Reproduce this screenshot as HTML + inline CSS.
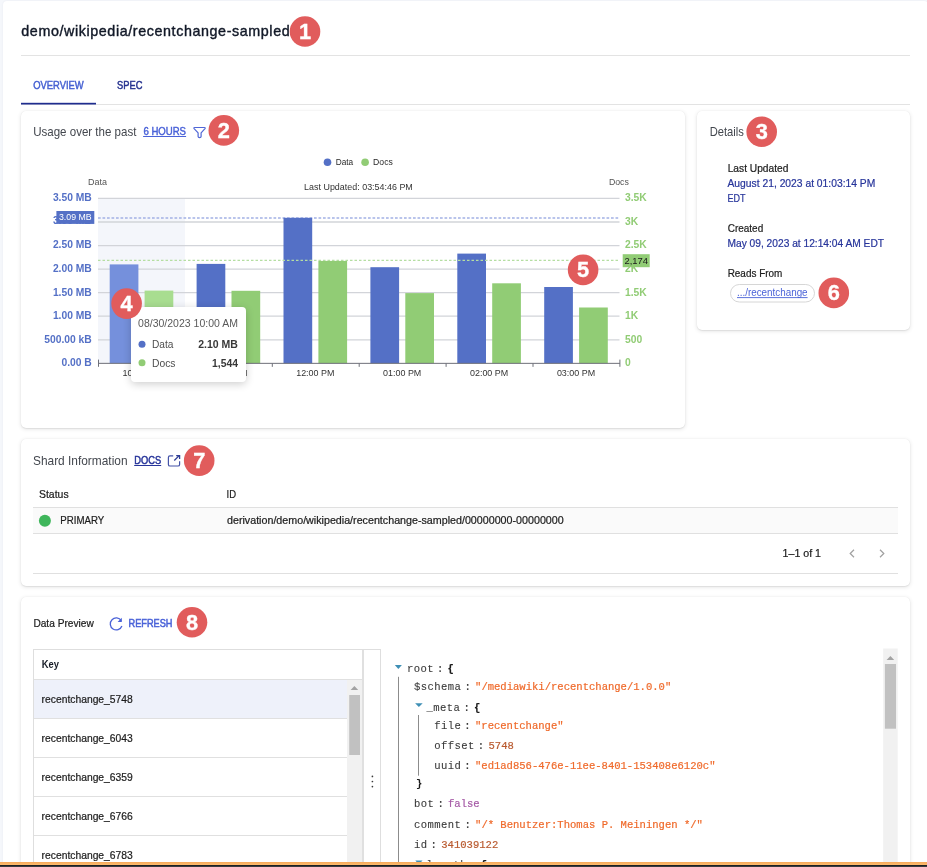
<!DOCTYPE html>
<html><head><meta charset="utf-8"><title>demo/wikipedia/recentchange-sampled</title>
<style>
html,body{margin:0;padding:0;}
body{width:927px;height:867px;overflow:hidden;position:relative;background:#f5f7fb;font-family:"Liberation Sans", sans-serif;}
.panel{position:absolute;left:3px;top:1px;width:925px;height:900px;background:#fff;border-radius:4px;box-shadow:0 0 2px rgba(60,70,100,.08);}
.card{position:absolute;background:#fff;border-radius:5px;box-shadow:0 1px 4px 0 rgba(0,0,0,.12),0 1px 1px 0 rgba(0,0,0,.05),0 0 1px rgba(0,0,0,.08);}
svg.layer{position:absolute;left:0;top:0;will-change:transform;}
.tip{position:absolute;left:130.7px;top:307px;width:115.7px;height:74.5px;background:#fff;border-radius:4px;box-shadow:0 2px 9px rgba(0,0,0,.2);}
.bar1{position:absolute;left:0;top:862px;width:927px;height:3px;background:linear-gradient(#f5a85a,#fdbd6e);}
.bar2{position:absolute;left:0;top:865px;width:927px;height:2px;background:linear-gradient(#1d2025 50%,#3b3c3e 50%);}
</style></head><body>
<div class="panel"></div>
<div class="card" style="left:21px;top:111px;width:664px;height:317px"></div>
<div class="card" style="left:697px;top:111px;width:213px;height:219px"></div>
<div class="card" style="left:21px;top:439px;width:889px;height:147px"></div>
<div class="card" style="left:21px;top:597px;width:889px;height:300px"></div>
<svg class="layer" width="927" height="867" viewBox="0 0 927 867">
<text x="21.3" y="35.5" font-size="14.3" fill="#111827" font-family='"Liberation Sans", sans-serif' letter-spacing="0.6" stroke="#111827" stroke-width="0.4">demo/wikipedia/recentchange-sampled</text>
<line x1="21" y1="55.5" x2="910" y2="55.5" stroke="#e3e3e3" stroke-width="1"/>
<text x="33.2" y="88.6" font-size="10.6" fill="#4560d2" font-family='"Liberation Sans", sans-serif' textLength="50.5" lengthAdjust="spacingAndGlyphs" stroke="#4560d2" stroke-width="0.45">OVERVIEW</text>
<text x="117" y="88.6" font-size="10.6" fill="#24318f" font-family='"Liberation Sans", sans-serif' textLength="25.4" lengthAdjust="spacingAndGlyphs" stroke="#24318f" stroke-width="0.45">SPEC</text>
<line x1="21" y1="104.5" x2="910" y2="104.5" stroke="#e3e3e3" stroke-width="1"/>
<rect x="21" y="102.8" width="75" height="1.7" fill="#1f2d8f"/>
<text x="33.2" y="136" font-size="13" fill="#43474e" font-family='"Liberation Sans", sans-serif' textLength="103.2" lengthAdjust="spacingAndGlyphs">Usage over the past</text>
<text x="143.4" y="134.8" font-size="11.2" fill="#4a62d8" font-family='"Liberation Sans", sans-serif' textLength="42.6" lengthAdjust="spacingAndGlyphs" stroke="#4a62d8" stroke-width="0.45">6 HOURS</text>
<line x1="143.1" y1="136.5" x2="186.1" y2="136.5" stroke="#4a62d8" stroke-width="1"/>
<path d="M194.6 127.5 H204.4 Q205.6 127.5 205 128.6 L201.1 132.9 V136.6 Q201.1 137.6 199.6 137.6 Q198.1 137.6 198.1 136.6 V132.9 L194.1 128.6 Q193.5 127.5 194.6 127.5 Z" fill="none" stroke="#4f66d6" stroke-width="1.2" stroke-linejoin="round"/>
<rect x="98" y="198.45" width="87" height="164.90000000000003" fill="#f4f6fb"/>
<line x1="98" y1="198.4" x2="619.5" y2="198.4" stroke="#d2d4d9" stroke-width="1.3"/>
<line x1="98" y1="222.0" x2="619.5" y2="222.0" stroke="#d2d4d9" stroke-width="1.3"/>
<line x1="98" y1="245.6" x2="619.5" y2="245.6" stroke="#d2d4d9" stroke-width="1.3"/>
<line x1="98" y1="269.1" x2="619.5" y2="269.1" stroke="#d2d4d9" stroke-width="1.3"/>
<line x1="98" y1="292.7" x2="619.5" y2="292.7" stroke="#d2d4d9" stroke-width="1.3"/>
<line x1="98" y1="316.2" x2="619.5" y2="316.2" stroke="#d2d4d9" stroke-width="1.3"/>
<line x1="98" y1="339.8" x2="619.5" y2="339.8" stroke="#d2d4d9" stroke-width="1.3"/>
<line x1="98" y1="218.0" x2="619.5" y2="218.0" stroke="#a3b1e5" stroke-width="1.5" stroke-dasharray="2.7,1.8"/>
<rect x="109.7" y="264.4" width="28.7" height="98.9" fill="#7590dc"/>
<rect x="144.6" y="290.6" width="28.7" height="72.7" fill="#a8dd90"/>
<rect x="196.6" y="263.9" width="28.7" height="99.4" fill="#5470c6"/>
<rect x="231.5" y="290.8" width="28.7" height="72.6" fill="#91cc75"/>
<rect x="283.5" y="217.8" width="28.7" height="145.6" fill="#5470c6"/>
<rect x="318.4" y="260.9" width="28.7" height="102.4" fill="#91cc75"/>
<rect x="370.4" y="267.2" width="28.7" height="96.1" fill="#5470c6"/>
<rect x="405.3" y="293.1" width="28.7" height="70.2" fill="#91cc75"/>
<rect x="457.3" y="253.6" width="28.7" height="109.8" fill="#5470c6"/>
<rect x="492.2" y="283.3" width="28.7" height="80.1" fill="#91cc75"/>
<rect x="544.2" y="287.0" width="28.7" height="76.3" fill="#5470c6"/>
<rect x="579.1" y="307.5" width="28.7" height="55.8" fill="#91cc75"/>
<line x1="98" y1="260.4" x2="619.5" y2="260.4" stroke="#b5dea2" stroke-width="1.1" stroke-dasharray="2.5,2"/>
<line x1="98.5" y1="363.35" x2="620" y2="363.35" stroke="#6e7079" stroke-width="1"/>
<line x1="98.5" y1="359.6" x2="98.5" y2="366.8" stroke="#6e7079" stroke-width="1"/>
<line x1="185.4" y1="363.35" x2="185.4" y2="366.85" stroke="#6e7079" stroke-width="1"/>
<line x1="272.3" y1="363.35" x2="272.3" y2="366.85" stroke="#6e7079" stroke-width="1"/>
<line x1="359.2" y1="363.35" x2="359.2" y2="366.85" stroke="#6e7079" stroke-width="1"/>
<line x1="446.1" y1="363.35" x2="446.1" y2="366.85" stroke="#6e7079" stroke-width="1"/>
<line x1="533.0" y1="363.35" x2="533.0" y2="366.85" stroke="#6e7079" stroke-width="1"/>
<line x1="619.9" y1="359.6" x2="619.9" y2="366.8" stroke="#6e7079" stroke-width="1"/>
<text x="91.8" y="366.2" font-size="10.3" fill="#5470c6" font-family='"Liberation Sans", sans-serif' font-weight="700" text-anchor="end">0.00 B</text>
<text x="91.8" y="342.6" font-size="10.3" fill="#5470c6" font-family='"Liberation Sans", sans-serif' font-weight="700" text-anchor="end">500.00 kB</text>
<text x="91.8" y="319.0" font-size="10.3" fill="#5470c6" font-family='"Liberation Sans", sans-serif' font-weight="700" text-anchor="end">1.00 MB</text>
<text x="91.8" y="295.5" font-size="10.3" fill="#5470c6" font-family='"Liberation Sans", sans-serif' font-weight="700" text-anchor="end">1.50 MB</text>
<text x="91.8" y="271.9" font-size="10.3" fill="#5470c6" font-family='"Liberation Sans", sans-serif' font-weight="700" text-anchor="end">2.00 MB</text>
<text x="91.8" y="248.4" font-size="10.3" fill="#5470c6" font-family='"Liberation Sans", sans-serif' font-weight="700" text-anchor="end">2.50 MB</text>
<text x="91.8" y="223.8" font-size="10.3" fill="#5470c6" font-family='"Liberation Sans", sans-serif' font-weight="700" text-anchor="end">3.00 MB</text>
<text x="91.8" y="201.2" font-size="10.3" fill="#5470c6" font-family='"Liberation Sans", sans-serif' font-weight="700" text-anchor="end">3.50 MB</text>
<text x="625" y="366.2" font-size="10.3" fill="#91cc75" font-family='"Liberation Sans", sans-serif' font-weight="700">0</text>
<text x="625" y="342.6" font-size="10.3" fill="#91cc75" font-family='"Liberation Sans", sans-serif' font-weight="700">500</text>
<text x="625" y="319.0" font-size="10.3" fill="#91cc75" font-family='"Liberation Sans", sans-serif' font-weight="700">1K</text>
<text x="625" y="295.5" font-size="10.3" fill="#91cc75" font-family='"Liberation Sans", sans-serif' font-weight="700">1.5K</text>
<text x="625" y="271.9" font-size="10.3" fill="#91cc75" font-family='"Liberation Sans", sans-serif' font-weight="700">2K</text>
<text x="625" y="248.4" font-size="10.3" fill="#91cc75" font-family='"Liberation Sans", sans-serif' font-weight="700">2.5K</text>
<text x="625" y="224.8" font-size="10.3" fill="#91cc75" font-family='"Liberation Sans", sans-serif' font-weight="700">3K</text>
<text x="625" y="201.2" font-size="10.3" fill="#91cc75" font-family='"Liberation Sans", sans-serif' font-weight="700">3.5K</text>
<rect x="56.4" y="211" width="37.9" height="12.9" fill="#5470c6"/>
<text x="59" y="220" font-size="9.6" fill="#fff" font-family='"Liberation Sans", sans-serif' textLength="32.6" lengthAdjust="spacingAndGlyphs">3.09 MB</text>
<rect x="622.7" y="254.2" width="27" height="13" fill="#91cc75"/>
<text x="624.5" y="264.4" font-size="9.6" fill="#1a1a1a" font-family='"Liberation Sans", sans-serif' textLength="23.5" lengthAdjust="spacingAndGlyphs">2,174</text>
<text x="88" y="184.8" font-size="9.4" fill="#555" font-family='"Liberation Sans", sans-serif' textLength="19" lengthAdjust="spacingAndGlyphs">Data</text>
<text x="608.9" y="184.8" font-size="9.4" fill="#555" font-family='"Liberation Sans", sans-serif' textLength="20" lengthAdjust="spacingAndGlyphs">Docs</text>
<text x="141.5" y="376.1" font-size="9.7" fill="#333" font-family='"Liberation Sans", sans-serif' text-anchor="middle" textLength="38.2" lengthAdjust="spacingAndGlyphs">10:00 AM</text>
<text x="228.4" y="376.1" font-size="9.7" fill="#333" font-family='"Liberation Sans", sans-serif' text-anchor="middle" textLength="38.2" lengthAdjust="spacingAndGlyphs">11:00 AM</text>
<text x="315.3" y="376.1" font-size="9.7" fill="#333" font-family='"Liberation Sans", sans-serif' text-anchor="middle" textLength="38.2" lengthAdjust="spacingAndGlyphs">12:00 PM</text>
<text x="402.2" y="376.1" font-size="9.7" fill="#333" font-family='"Liberation Sans", sans-serif' text-anchor="middle" textLength="38.2" lengthAdjust="spacingAndGlyphs">01:00 PM</text>
<text x="489.1" y="376.1" font-size="9.7" fill="#333" font-family='"Liberation Sans", sans-serif' text-anchor="middle" textLength="38.2" lengthAdjust="spacingAndGlyphs">02:00 PM</text>
<text x="576.0" y="376.1" font-size="9.7" fill="#333" font-family='"Liberation Sans", sans-serif' text-anchor="middle" textLength="38.2" lengthAdjust="spacingAndGlyphs">03:00 PM</text>
<circle cx="327.5" cy="162.3" r="3.8" fill="#5470c6"/>
<text x="335.7" y="164.9" font-size="8.8" fill="#2a2a2a" font-family='"Liberation Sans", sans-serif' textLength="17.5" lengthAdjust="spacingAndGlyphs">Data</text>
<circle cx="365.1" cy="162.3" r="3.8" fill="#91cc75"/>
<text x="373.1" y="164.9" font-size="8.8" fill="#2a2a2a" font-family='"Liberation Sans", sans-serif' textLength="19.7" lengthAdjust="spacingAndGlyphs">Docs</text>
<text x="304.1" y="189.5" font-size="9.1" fill="#333" font-family='"Liberation Sans", sans-serif' textLength="108.7" lengthAdjust="spacingAndGlyphs">Last Updated: 03:54:46 PM</text>
<text x="709.7" y="135.9" font-size="13" fill="#43474e" font-family='"Liberation Sans", sans-serif' textLength="34.2" lengthAdjust="spacingAndGlyphs">Details</text>
<text x="727.7" y="172.1" font-size="11" fill="#1c1c1c" font-family='"Liberation Sans", sans-serif' textLength="60.7" lengthAdjust="spacingAndGlyphs" stroke="#1c1c1c" stroke-width="0.22">Last Updated</text>
<text x="727.5" y="186.9" font-size="11" fill="#26349a" font-family='"Liberation Sans", sans-serif' textLength="147.8" lengthAdjust="spacingAndGlyphs" stroke="#26349a" stroke-width="0.22">August 21, 2023 at 01:03:14 PM</text>
<text x="727.5" y="201.5" font-size="11" fill="#26349a" font-family='"Liberation Sans", sans-serif' textLength="18" lengthAdjust="spacingAndGlyphs" stroke="#26349a" stroke-width="0.22">EDT</text>
<text x="727.7" y="232" font-size="11" fill="#1c1c1c" font-family='"Liberation Sans", sans-serif' textLength="35.5" lengthAdjust="spacingAndGlyphs" stroke="#1c1c1c" stroke-width="0.22">Created</text>
<text x="727.5" y="246.8" font-size="11" fill="#26349a" font-family='"Liberation Sans", sans-serif' textLength="156.5" lengthAdjust="spacingAndGlyphs" stroke="#26349a" stroke-width="0.22">May 09, 2023 at 12:14:04 AM EDT</text>
<text x="727.7" y="277.3" font-size="11" fill="#1c1c1c" font-family='"Liberation Sans", sans-serif' textLength="54.6" lengthAdjust="spacingAndGlyphs" stroke="#1c1c1c" stroke-width="0.22">Reads From</text>
<rect x="730.5" y="284.5" width="84" height="17.5" rx="8.75" fill="#fff" stroke="#d6d6d6" stroke-width="1"/>
<text x="737" y="296" font-size="10.3" fill="#4a62d8" font-family='"Liberation Sans", sans-serif' textLength="70.6" lengthAdjust="spacingAndGlyphs">.../recentchange</text>
<line x1="737" y1="297.6" x2="807.6" y2="297.6" stroke="#4a62d8" stroke-width="0.9"/>
<text x="33" y="465.2" font-size="13" fill="#43474e" font-family='"Liberation Sans", sans-serif' textLength="94.5" lengthAdjust="spacingAndGlyphs">Shard Information</text>
<text x="134.3" y="463.9" font-size="11" fill="#26349a" font-family='"Liberation Sans", sans-serif' textLength="26.8" lengthAdjust="spacingAndGlyphs" stroke="#26349a" stroke-width="0.5">DOCS</text>
<line x1="134.2" y1="465.5" x2="161.2" y2="465.5" stroke="#26349a" stroke-width="1"/>
<path d="M173.2 455.8 H170 a1.6 1.6 0 0 0 -1.6 1.6 V464.4 a1.6 1.6 0 0 0 1.6 1.6 H178 a1.6 1.6 0 0 0 1.6 -1.6 V461.2" fill="none" stroke="#4453a8" stroke-width="1.2"/>
<path d="M174.3 460.5 L179.4 455.4 M176.2 455.6 H179.6 V459" fill="none" stroke="#2f3d96" stroke-width="1.3"/>
<text x="39" y="498.1" font-size="11" fill="#1c1c1c" font-family='"Liberation Sans", sans-serif' textLength="29.6" lengthAdjust="spacingAndGlyphs" stroke="#1c1c1c" stroke-width="0.22">Status</text>
<text x="226.5" y="498.1" font-size="11" fill="#1c1c1c" font-family='"Liberation Sans", sans-serif' textLength="9.5" lengthAdjust="spacingAndGlyphs" stroke="#1c1c1c" stroke-width="0.22">ID</text>
<rect x="33" y="508" width="865" height="25" fill="#fafafa"/>
<line x1="33" y1="507.5" x2="898" y2="507.5" stroke="#e0e0e0" stroke-width="1"/>
<line x1="33" y1="533.5" x2="898" y2="533.5" stroke="#e0e0e0" stroke-width="1"/>
<circle cx="44.9" cy="520.7" r="6" fill="#3fb65b"/>
<text x="60.3" y="524.2" font-size="11" fill="#1c1c1c" font-family='"Liberation Sans", sans-serif' textLength="43.9" lengthAdjust="spacingAndGlyphs" stroke="#1c1c1c" stroke-width="0.22">PRIMARY</text>
<text x="227" y="524.2" font-size="11" fill="#1c1c1c" font-family='"Liberation Sans", sans-serif' textLength="336.7" lengthAdjust="spacingAndGlyphs" stroke="#1c1c1c" stroke-width="0.22">derivation/demo/wikipedia/recentchange-sampled/00000000-00000000</text>
<text x="782.6" y="557" font-size="11" fill="#1c1c1c" font-family='"Liberation Sans", sans-serif' textLength="38.4" lengthAdjust="spacingAndGlyphs" stroke="#1c1c1c" stroke-width="0.22">1–1 of 1</text>
<path d="M854 549.8 L850.2 553.5 L854 557.2" fill="none" stroke="#a0a0a0" stroke-width="1.2"/>
<path d="M880 549.8 L883.8 553.5 L880 557.2" fill="none" stroke="#a0a0a0" stroke-width="1.2"/>
<line x1="33" y1="573.5" x2="898" y2="573.5" stroke="#e0e0e0" stroke-width="1"/>
<text x="33.4" y="627" font-size="11" fill="#1c1c1c" font-family='"Liberation Sans", sans-serif' textLength="60.4" lengthAdjust="spacingAndGlyphs" stroke="#1c1c1c" stroke-width="0.22">Data Preview</text>
<path d="M121.3 620.6 A6 6 0 1 0 121.9 626" fill="none" stroke="#4a62d8" stroke-width="1.3"/>
<path d="M121.8 617.8 V622 H117.6 Z" fill="#4a62d8"/>
<text x="128.5" y="627" font-size="11" fill="#4a62d8" font-family='"Liberation Sans", sans-serif' textLength="44" lengthAdjust="spacingAndGlyphs" stroke="#4a62d8" stroke-width="0.55">REFRESH</text>
<rect x="33.5" y="649.5" width="347" height="230" fill="#fff" stroke="#dedede" stroke-width="1"/>
<rect x="362" y="650" width="2" height="220" fill="#e0e0e0"/>
<text x="41.7" y="668" font-size="11" fill="#161b26" font-family='"Liberation Sans", sans-serif' font-weight="700" textLength="17.2" lengthAdjust="spacingAndGlyphs">Key</text>
<line x1="34" y1="679.5" x2="362" y2="679.5" stroke="#e0e0e0" stroke-width="1"/>
<rect x="34" y="680" width="313" height="38" fill="#eef1fa"/>
<line x1="34" y1="718.5" x2="347" y2="718.5" stroke="#e0e0e0" stroke-width="1"/>
<line x1="34" y1="757.5" x2="347" y2="757.5" stroke="#e0e0e0" stroke-width="1"/>
<line x1="34" y1="796.5" x2="347" y2="796.5" stroke="#e0e0e0" stroke-width="1"/>
<line x1="34" y1="835.5" x2="347" y2="835.5" stroke="#e0e0e0" stroke-width="1"/>
<text x="41.6" y="703.0" font-size="11" fill="#1c1c1c" font-family='"Liberation Sans", sans-serif' textLength="91.2" lengthAdjust="spacingAndGlyphs" stroke="#1c1c1c" stroke-width="0.22">recentchange_5748</text>
<text x="41.6" y="742.1" font-size="11" fill="#1c1c1c" font-family='"Liberation Sans", sans-serif' textLength="91.2" lengthAdjust="spacingAndGlyphs" stroke="#1c1c1c" stroke-width="0.22">recentchange_6043</text>
<text x="41.6" y="781.2" font-size="11" fill="#1c1c1c" font-family='"Liberation Sans", sans-serif' textLength="91.2" lengthAdjust="spacingAndGlyphs" stroke="#1c1c1c" stroke-width="0.22">recentchange_6359</text>
<text x="41.6" y="820.3" font-size="11" fill="#1c1c1c" font-family='"Liberation Sans", sans-serif' textLength="91.2" lengthAdjust="spacingAndGlyphs" stroke="#1c1c1c" stroke-width="0.22">recentchange_6766</text>
<text x="41.6" y="859.4" font-size="11" fill="#1c1c1c" font-family='"Liberation Sans", sans-serif' textLength="91.2" lengthAdjust="spacingAndGlyphs" stroke="#1c1c1c" stroke-width="0.22">recentchange_6783</text>
<rect x="347" y="680" width="15" height="190" fill="#f1f1f1"/>
<path d="M350.6 690 L354.4 686 L358.2 690 Z" fill="#a3a3a3"/>
<rect x="349.2" y="695" width="10.8" height="60" fill="#c1c1c1"/>
<circle cx="372.4" cy="776.4" r="0.85" fill="#3a3a3a"/><circle cx="372.4" cy="781.5" r="0.85" fill="#3a3a3a"/><circle cx="372.4" cy="786.6" r="0.85" fill="#3a3a3a"/>
<rect x="883.2" y="648.5" width="14.5" height="230" fill="#f1f1f1"/>
<path d="M886.6 660 L890.4 656 L894.2 660 Z" fill="#a3a3a3"/>
<rect x="884.9" y="664" width="11.1" height="64.7" fill="#c1c1c1"/>
<path d="M394.8 664.9 H401.9 L398.35 668.9 Z" fill="#3f8fb5"/>
<text x="406.9" y="671.7" font-size="10.567" fill="#3a3a3a" font-family='"Liberation Mono", monospace' letter-spacing="0.42" stroke="#3a3a3a" stroke-width="0.1">root</text>
<text x="436.94" y="671.7" font-size="10.567" fill="#3a3a3a" font-family='"Liberation Mono", monospace' stroke="#3a3a3a" stroke-width="0.2">:</text>
<text x="447.58" y="671.7" font-size="10.567" fill="#1c1c1c" font-family='"Liberation Mono", monospace' font-weight="700" stroke="#1c1c1c" stroke-width="0.2">{</text>
<line x1="398.5" y1="676.8" x2="398.5" y2="870" stroke="#8c8c8c" stroke-width="1"/>
<text x="414.1" y="689.9" font-size="10.567" fill="#3a3a3a" font-family='"Liberation Mono", monospace' letter-spacing="0.42" stroke="#3a3a3a" stroke-width="0.1">$schema</text>
<text x="464.42" y="689.9" font-size="10.567" fill="#3a3a3a" font-family='"Liberation Mono", monospace' stroke="#3a3a3a" stroke-width="0.2">:</text>
<text x="475.06" y="689.9" font-size="10.567" fill="#ef6a2b" font-family='"Liberation Mono", monospace' font-weight="400" stroke="#ef6a2b" stroke-width="0.2">&quot;/mediawiki/recentchange/1.0.0&quot;</text>
<path d="M415.1 703.2 H422.7 L418.9 707.1 Z" fill="#3f8fb5"/>
<text x="426.6" y="710.8" font-size="10.567" fill="#3a3a3a" font-family='"Liberation Mono", monospace' letter-spacing="0.42" stroke="#3a3a3a" stroke-width="0.1">_meta</text>
<text x="463.4" y="710.8" font-size="10.567" fill="#3a3a3a" font-family='"Liberation Mono", monospace' stroke="#3a3a3a" stroke-width="0.2">:</text>
<text x="474.04" y="710.8" font-size="10.567" fill="#1c1c1c" font-family='"Liberation Mono", monospace' font-weight="700" stroke="#1c1c1c" stroke-width="0.2">{</text>
<line x1="418.5" y1="715" x2="418.5" y2="775.7" stroke="#8c8c8c" stroke-width="1"/>
<text x="434.3" y="729.1" font-size="10.567" fill="#3a3a3a" font-family='"Liberation Mono", monospace' letter-spacing="0.42" stroke="#3a3a3a" stroke-width="0.1">file</text>
<text x="464.34" y="729.1" font-size="10.567" fill="#3a3a3a" font-family='"Liberation Mono", monospace' stroke="#3a3a3a" stroke-width="0.2">:</text>
<text x="474.98" y="729.1" font-size="10.567" fill="#ef6a2b" font-family='"Liberation Mono", monospace' font-weight="400" stroke="#ef6a2b" stroke-width="0.2">&quot;recentchange&quot;</text>
<text x="434.3" y="748.8" font-size="10.567" fill="#3a3a3a" font-family='"Liberation Mono", monospace' letter-spacing="0.42" stroke="#3a3a3a" stroke-width="0.1">offset</text>
<text x="477.86" y="748.8" font-size="10.567" fill="#3a3a3a" font-family='"Liberation Mono", monospace' stroke="#3a3a3a" stroke-width="0.2">:</text>
<text x="488.5" y="748.8" font-size="10.567" fill="#b95a2f" font-family='"Liberation Mono", monospace' font-weight="400" stroke="#b95a2f" stroke-width="0.2">5748</text>
<text x="434.3" y="768.5" font-size="10.567" fill="#3a3a3a" font-family='"Liberation Mono", monospace' letter-spacing="0.42" stroke="#3a3a3a" stroke-width="0.1">uuid</text>
<text x="464.34" y="768.5" font-size="10.567" fill="#3a3a3a" font-family='"Liberation Mono", monospace' stroke="#3a3a3a" stroke-width="0.2">:</text>
<text x="474.98" y="768.5" font-size="10.567" fill="#ef6a2b" font-family='"Liberation Mono", monospace' font-weight="400" stroke="#ef6a2b" stroke-width="0.2">&quot;ed1ad856-476e-11ee-8401-153408e6120c&quot;</text>
<text x="416" y="786.5" font-size="10.567" fill="#1c1c1c" font-family='"Liberation Mono", monospace' font-weight="700">}</text>
<text x="414.1" y="806.7" font-size="10.567" fill="#3a3a3a" font-family='"Liberation Mono", monospace' letter-spacing="0.42" stroke="#3a3a3a" stroke-width="0.1">bot</text>
<text x="437.38" y="806.7" font-size="10.567" fill="#3a3a3a" font-family='"Liberation Mono", monospace' stroke="#3a3a3a" stroke-width="0.2">:</text>
<text x="448.02" y="806.7" font-size="10.567" fill="#a55aa6" font-family='"Liberation Mono", monospace' font-weight="400" stroke="#a55aa6" stroke-width="0.2">false</text>
<text x="414.1" y="827.5" font-size="10.567" fill="#3a3a3a" font-family='"Liberation Mono", monospace' letter-spacing="0.42" stroke="#3a3a3a" stroke-width="0.1">comment</text>
<text x="464.42" y="827.5" font-size="10.567" fill="#3a3a3a" font-family='"Liberation Mono", monospace' stroke="#3a3a3a" stroke-width="0.2">:</text>
<text x="475.06" y="827.5" font-size="10.567" fill="#ef6a2b" font-family='"Liberation Mono", monospace' font-weight="400" stroke="#ef6a2b" stroke-width="0.2">&quot;/* Benutzer:Thomas P. Meiningen */&quot;</text>
<text x="414.1" y="847.9" font-size="10.567" fill="#3a3a3a" font-family='"Liberation Mono", monospace' letter-spacing="0.42" stroke="#3a3a3a" stroke-width="0.1">id</text>
<text x="430.62" y="847.9" font-size="10.567" fill="#3a3a3a" font-family='"Liberation Mono", monospace' stroke="#3a3a3a" stroke-width="0.2">:</text>
<text x="441.26" y="847.9" font-size="10.567" fill="#b95a2f" font-family='"Liberation Mono", monospace' font-weight="400" stroke="#b95a2f" stroke-width="0.2">341039122</text>
<path d="M415.3 860.6 H422.5 L418.9 864.5 Z" fill="#3f8fb5"/>
<text x="426.6" y="868.2" font-size="10.567" fill="#3a3a3a" font-family='"Liberation Mono", monospace' letter-spacing="0.42" stroke="#3a3a3a" stroke-width="0.1">length</text>
<text x="470.16" y="868.2" font-size="10.567" fill="#3a3a3a" font-family='"Liberation Mono", monospace' stroke="#3a3a3a" stroke-width="0.2">:</text>
<text x="480.8" y="868.2" font-size="10.567" fill="#1c1c1c" font-family='"Liberation Mono", monospace' font-weight="700" stroke="#1c1c1c" stroke-width="0.2">{</text>
<circle cx="305" cy="31.5" r="15.3" fill="#e15c5c"/>
<text x="305" y="38.9" font-size="21.8" fill="#fff" font-family='"Liberation Sans", sans-serif' font-weight="700" text-anchor="middle" stroke="#fff" stroke-width="0.35">1</text>
<circle cx="223.8" cy="130.4" r="15.3" fill="#e15c5c"/>
<text x="223.8" y="137.8" font-size="21.8" fill="#fff" font-family='"Liberation Sans", sans-serif' font-weight="700" text-anchor="middle" stroke="#fff" stroke-width="0.35">2</text>
<circle cx="761.7" cy="131.7" r="15.3" fill="#e15c5c"/>
<text x="761.7" y="139.1" font-size="21.8" fill="#fff" font-family='"Liberation Sans", sans-serif' font-weight="700" text-anchor="middle" stroke="#fff" stroke-width="0.35">3</text>
<circle cx="583.1" cy="269.9" r="15.3" fill="#e15c5c"/>
<text x="583.1" y="277.3" font-size="21.8" fill="#fff" font-family='"Liberation Sans", sans-serif' font-weight="700" text-anchor="middle" stroke="#fff" stroke-width="0.35">5</text>
<circle cx="833.8" cy="292.9" r="15.3" fill="#e15c5c"/>
<text x="833.8" y="300.3" font-size="21.8" fill="#fff" font-family='"Liberation Sans", sans-serif' font-weight="700" text-anchor="middle" stroke="#fff" stroke-width="0.35">6</text>
<circle cx="199.2" cy="460.6" r="15.3" fill="#e15c5c"/>
<text x="199.2" y="468.0" font-size="21.8" fill="#fff" font-family='"Liberation Sans", sans-serif' font-weight="700" text-anchor="middle" stroke="#fff" stroke-width="0.35">7</text>
<circle cx="192" cy="622.2" r="15.3" fill="#e15c5c"/>
<text x="192" y="629.6" font-size="21.8" fill="#fff" font-family='"Liberation Sans", sans-serif' font-weight="700" text-anchor="middle" stroke="#fff" stroke-width="0.35">8</text>
</svg>
<div class="tip"></div>
<svg class="layer" width="927" height="867" viewBox="0 0 927 867">
<text x="138.1" y="327" font-size="11.2" fill="#5a5a5a" font-family='"Liberation Sans", sans-serif' textLength="99.8" lengthAdjust="spacingAndGlyphs">08/30/2023 10:00 AM</text>
<circle cx="142" cy="344.2" r="3.5" fill="#5470c6"/>
<text x="152" y="348.2" font-size="11.2" fill="#4d4d4d" font-family='"Liberation Sans", sans-serif' textLength="21.5" lengthAdjust="spacingAndGlyphs">Data</text>
<text x="237.9" y="348.2" font-size="11.2" fill="#383838" font-family='"Liberation Sans", sans-serif' font-weight="700" text-anchor="end" textLength="39.7" lengthAdjust="spacingAndGlyphs">2.10 MB</text>
<circle cx="142" cy="362.8" r="3.5" fill="#91cc75"/>
<text x="152" y="366.8" font-size="11.2" fill="#4d4d4d" font-family='"Liberation Sans", sans-serif' textLength="23.5" lengthAdjust="spacingAndGlyphs">Docs</text>
<text x="237.9" y="366.8" font-size="11.2" fill="#383838" font-family='"Liberation Sans", sans-serif' font-weight="700" text-anchor="end" textLength="25.9" lengthAdjust="spacingAndGlyphs">1,544</text>
<circle cx="126.6" cy="303.6" r="15.3" fill="#e15c5c"/>
<text x="126.6" y="311.0" font-size="21.8" fill="#fff" font-family='"Liberation Sans", sans-serif' font-weight="700" text-anchor="middle" stroke="#fff" stroke-width="0.35">4</text>
</svg>
<div class="bar1"></div><div class="bar2"></div>
</body></html>
